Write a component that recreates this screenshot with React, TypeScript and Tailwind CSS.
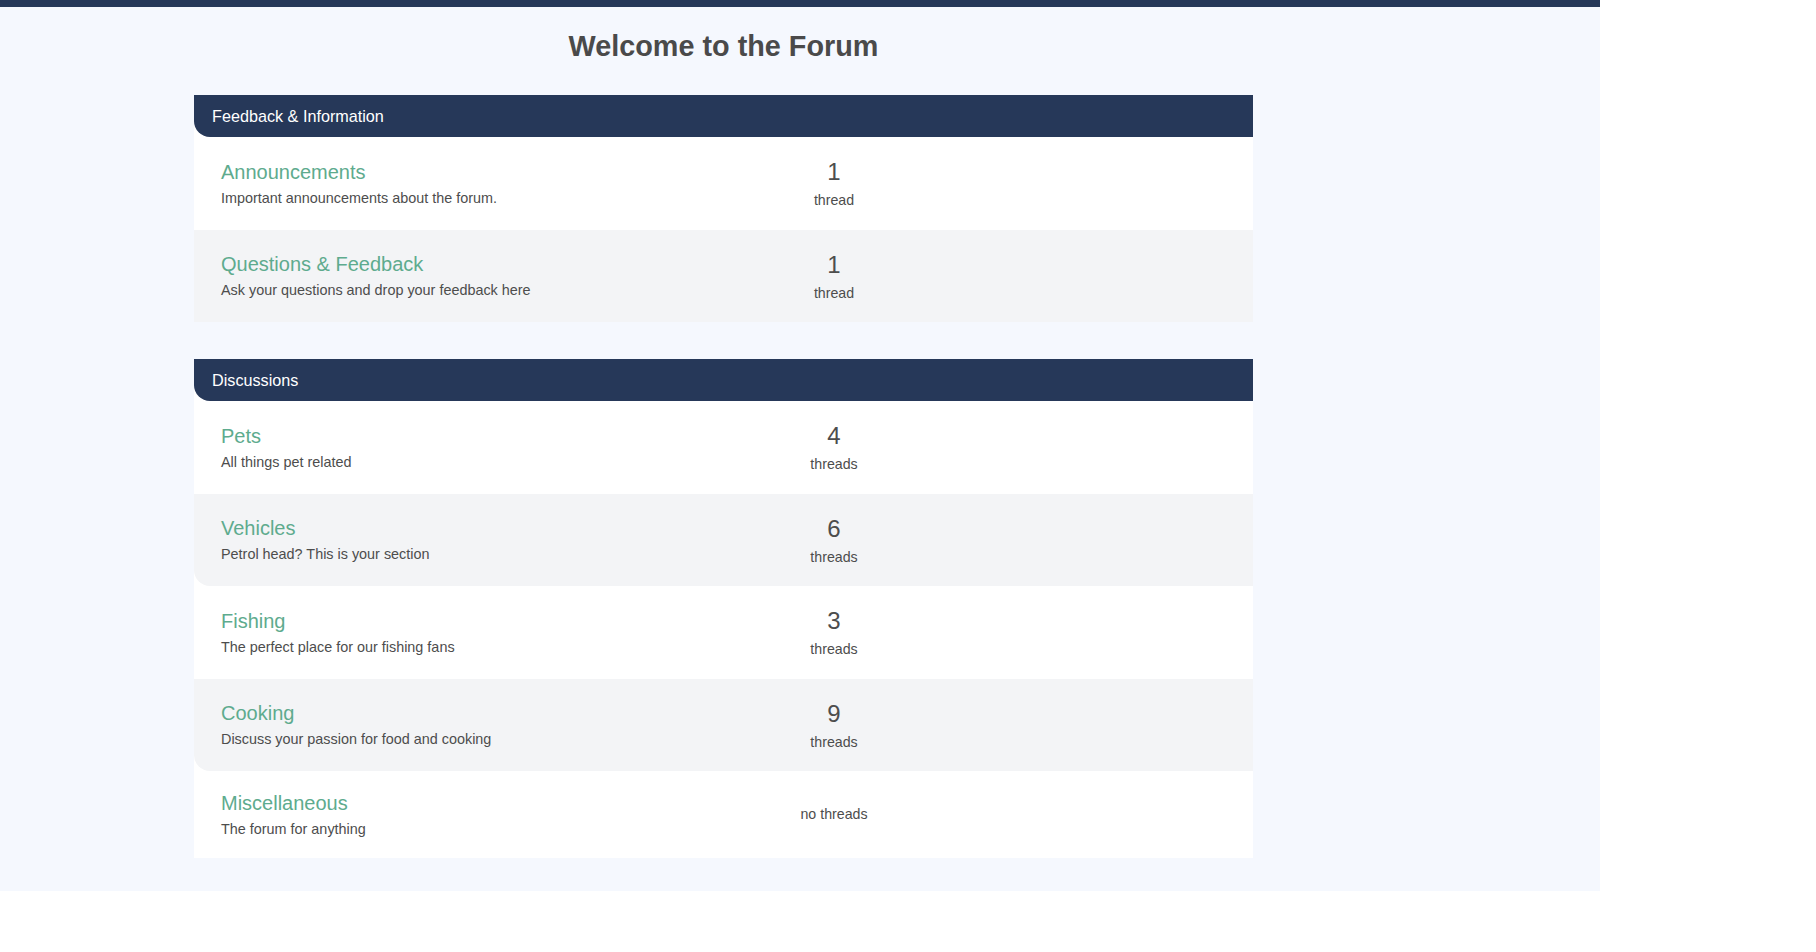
type Forum = {
  name: string;
  description: string;
  threads: number;
  rounded?: boolean;
};

type Section = {
  title: string;
  forums: Forum[];
};

const sections: Section[] = [
  {
    title: "Feedback & Information",
    forums: [
      { name: "Announcements", description: "Important announcements about the forum.", threads: 1 },
      { name: "Questions & Feedback", description: "Ask your questions and drop your feedback here", threads: 1 },
    ],
  },
  {
    title: "Discussions",
    forums: [
      { name: "Pets", description: "All things pet related", threads: 4 },
      { name: "Vehicles", description: "Petrol head? This is your section", threads: 6, rounded: true },
      { name: "Fishing", description: "The perfect place for our fishing fans", threads: 3 },
      { name: "Cooking", description: "Discuss your passion for food and cooking", threads: 9, rounded: true },
      { name: "Miscellaneous", description: "The forum for anything", threads: 0 },
    ],
  },
];

function ForumRow({ forum, odd }: { forum: Forum; odd: boolean }) {
  return (
    <div
      className={`flex items-center pl-[27px] ${forum.threads > 0 ? "py-[21.25px]" : "py-[20.75px]"} ${
        odd ? "bg-[#f3f4f6]" : "bg-white"
      } ${forum.rounded ? "rounded-bl-[16px]" : ""}`}
    >
      <div className="w-[553px]">
        <div className="text-[20px] leading-[23px] text-[#5eab8e]">{forum.name}</div>
        <div className="mt-[6px] text-[14.4px] leading-[16px] text-[#4d4d4d]">{forum.description}</div>
      </div>
      <div className="w-[120px] text-center text-[#4d4d4d]">
        {forum.threads > 0 ? (
          <>
            <div className="text-[24px] leading-[28px]">{forum.threads}</div>
            <div className="mt-[6px] text-[14.2px] leading-[16px]">
              {forum.threads === 1 ? "thread" : "threads"}
            </div>
          </>
        ) : (
          <div className="text-[14.2px] leading-[16px]">no threads</div>
        )}
      </div>
    </div>
  );
}

export default function App() {
  return (
    <div className="min-h-[952px] bg-white" style={{ fontFamily: '"Liberation Sans", Arial, sans-serif' }}>
      <div className="w-[1600px] border-t-[7px] border-[#263859] bg-[#f5f8fe] pb-[33px]">
        <div className="ml-[194px] w-[1059px]">
          <h1 className="pt-[23px] text-center text-[28.8px] font-bold leading-[33px] text-[#4a4a4a]">
            Welcome to the Forum
          </h1>

          <div className="mt-[32px] flex flex-col gap-[37px]">
            {sections.map((section) => (
              <div key={section.title} className="bg-white">
                <div className="flex h-[42px] items-center rounded-bl-[16px] bg-[#263859] pt-[1px] pl-[18px] text-[16.2px] text-white">
                  {section.title}
                </div>
                {section.forums.map((forum, i) => (
                  <ForumRow key={forum.name} forum={forum} odd={i % 2 === 1} />
                ))}
              </div>
            ))}
          </div>
        </div>
      </div>
    </div>
  );
}
